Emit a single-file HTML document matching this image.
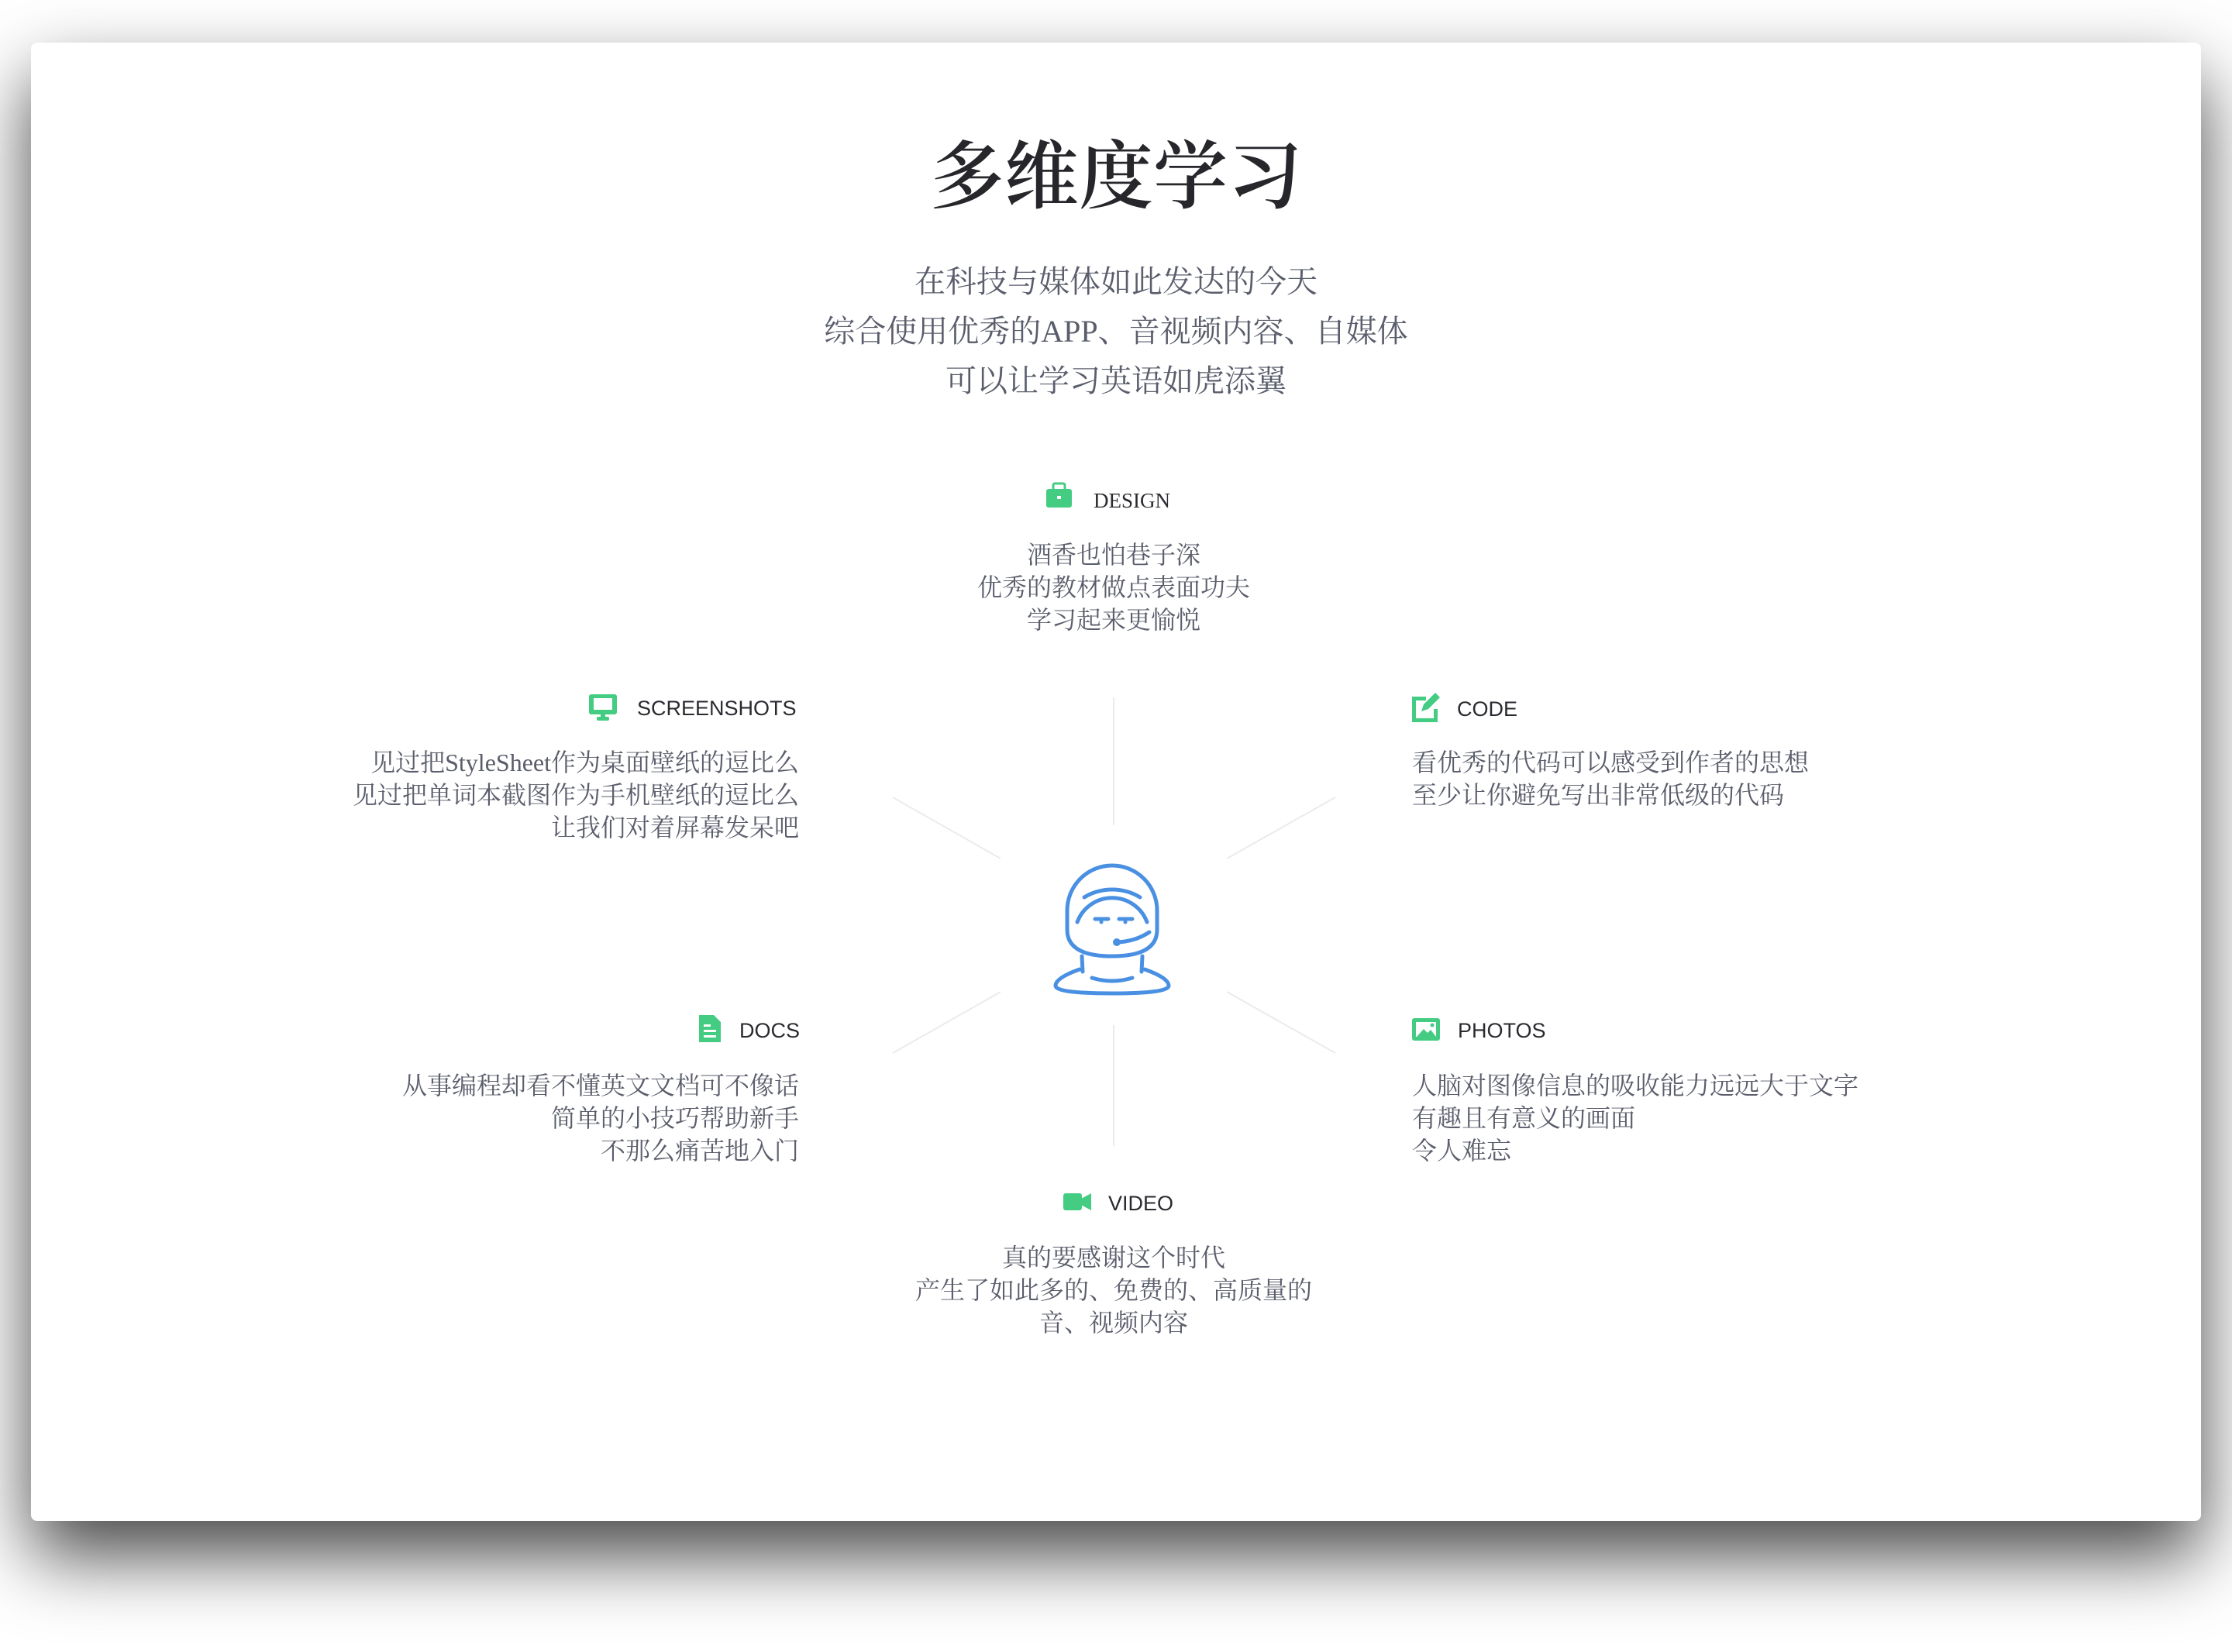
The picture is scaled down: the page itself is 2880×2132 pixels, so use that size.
<!DOCTYPE html>
<html><head><meta charset="utf-8"><style>
html,body{margin:0;padding:0;}
body{width:2880px;height:2132px;background:#fff;position:relative;overflow:hidden;}
.card{position:absolute;left:40px;top:55px;width:2800px;height:1908px;background:#fff;border-radius:8px;box-shadow:0 45px 95px rgba(0,0,0,0.72);}
.abs{position:absolute;}
.serif{font-family:"Liberation Serif","Noto Serif CJK SC",serif;}
.sans{font-family:"Liberation Sans","Noto Sans CJK SC",sans-serif;}
.title{left:0;width:2880px;top:164px;text-align:center;font-size:96px;line-height:130px;color:#26262b;font-family:"Liberation Serif","Noto Serif CJK SC",serif;font-weight:600;}
.sub{left:0;width:2880px;top:332px;text-align:center;font-size:40px;line-height:64px;color:#5a5d6b;}
.body{font-size:32px;line-height:42px;color:#5a5d6b;white-space:nowrap;}
.h{font-size:27px;line-height:36px;color:#2a2a30;white-space:nowrap;}
</style></head><body>
<div class="card"></div>
<div class="abs title">多维度学习</div>
<div class="abs sub serif">在科技与媒体如此发达的今天<br>综合使用优秀的APP、音视频内容、自媒体<br>可以让学习英语如虎添翼</div>

<div class="abs h serif" style="left:1411px;top:628px;">DESIGN</div>
<div class="abs body serif" style="left:0;width:2874px;top:695px;text-align:center;">酒香也怕巷子深<br>优秀的教材做点表面功夫<br>学习起来更愉悦</div>

<div class="abs h sans" style="left:822px;top:896px;">SCREENSHOTS</div>
<div class="abs body serif" style="right:1849px;top:963px;text-align:right;">见过把StyleSheet作为桌面壁纸的逗比么<br>见过把单词本截图作为手机壁纸的逗比么<br>让我们对着屏幕发呆吧</div>

<div class="abs h sans" style="left:1880px;top:897px;">CODE</div>
<div class="abs body serif" style="left:1822px;top:963px;">看优秀的代码可以感受到作者的思想<br>至少让你避免写出非常低级的代码</div>

<div class="abs h sans" style="left:954px;top:1312px;">DOCS</div>
<div class="abs body serif" style="right:1849px;top:1380px;text-align:right;">从事编程却看不懂英文文档可不像话<br>简单的小技巧帮助新手<br>不那么痛苦地入门</div>

<div class="abs h sans" style="left:1881px;top:1312px;">PHOTOS</div>
<div class="abs body serif" style="left:1822px;top:1380px;">人脑对图像信息的吸收能力远远大于文字<br>有趣且有意义的画面<br>令人难忘</div>

<div class="abs h sans" style="left:1430px;top:1535px;">VIDEO</div>
<div class="abs body serif" style="left:0;width:2874px;top:1602px;text-align:center;">真的要感谢这个时代<br>产生了如此多的、免费的、高质量的<br>音、视频内容</div>

<svg class="abs" style="left:0;top:0" width="2880" height="2132" viewBox="0 0 2880 2132">
  <g stroke="#ebebef" stroke-width="2" fill="none">
    <line x1="1437" y1="900" x2="1437" y2="1065"/>
    <line x1="1437" y1="1323" x2="1437" y2="1479"/>
    <line x1="1152" y1="1029" x2="1291" y2="1108"/>
    <line x1="1583" y1="1108" x2="1723" y2="1029"/>
    <line x1="1152" y1="1359" x2="1291" y2="1280"/>
    <line x1="1583" y1="1280" x2="1723" y2="1359"/>
  </g>
  <g fill="#43cc82">
    <rect x="1350" y="631" width="33" height="24" rx="3"/>
    <rect x="1359" y="624" width="15" height="9" rx="2" fill="none" stroke="#43cc82" stroke-width="3"/>
    <rect x="1364" y="640" width="5" height="4" fill="#fff"/>
    <rect x="760" y="896" width="36" height="26" rx="3"/>
    <rect x="766" y="901" width="24" height="15" fill="#fff"/>
    <rect x="775" y="921" width="6" height="5"/>
    <rect x="770" y="925" width="16" height="5" rx="2"/>
    <path d="M1822 899 h18 v5 h-13 v23 h23 v-12 h5 v17 h-33 z"/>
    <path d="M1834 918 l3 -9 l15 -15 l6 6 l-15 15 z"/>
    <path d="M902 1310 h19 l9 9 v26 h-28 z"/>
    <rect x="908" y="1322" width="9" height="3" fill="#fff"/>
    <rect x="908" y="1329" width="16" height="3" fill="#fff"/>
    <rect x="908" y="1336" width="16" height="3" fill="#fff"/>
    <rect x="1822" y="1314" width="36" height="29" rx="3"/>
    <rect x="1827" y="1319" width="26" height="19" fill="#fff"/>
    <path d="M1828 1338 l9 -10 l5 5 l4 -4 l7 9 z"/>
    <circle cx="1848" cy="1323" r="2.5"/>
    <rect x="1372" y="1540" width="24" height="22" rx="3"/>
    <path d="M1395 1547 l13 -7 v22 l-13 -7 z"/>
  </g>
  <g stroke="#4a90e2" stroke-width="5" fill="none" stroke-linecap="round">
    <path d="M1377 1175 A58 58 0 0 1 1493 1175 L1493 1200 Q1493 1234 1435 1234 Q1377 1234 1377 1200 Z"/>
    <path d="M1390 1190 A48 48 0 0 1 1480 1190"/>
    <path d="M1399 1158 A70 70 0 0 1 1471 1158"/>
    <path d="M1413 1186 h17 M1444 1186 h17"/>
    <path d="M1441 1216 Q1465 1215 1483 1203"/>
    <path d="M1396 1234 L1397 1254 M1474 1234 L1473 1254"/>
    <path d="M1409 1262 Q1435 1270 1461 1262"/>
    <path d="M1393 1251 Q1362 1262 1362 1272 Q1362 1282 1435 1282 Q1508 1282 1508 1272 Q1508 1262 1477 1251"/>
  </g>
  <g fill="#4a90e2">
    <circle cx="1441" cy="1216" r="5"/>
    <circle cx="1421" cy="1190" r="2.5"/>
    <circle cx="1452" cy="1190" r="2.5"/>
  </g>
</svg>
</body></html>
